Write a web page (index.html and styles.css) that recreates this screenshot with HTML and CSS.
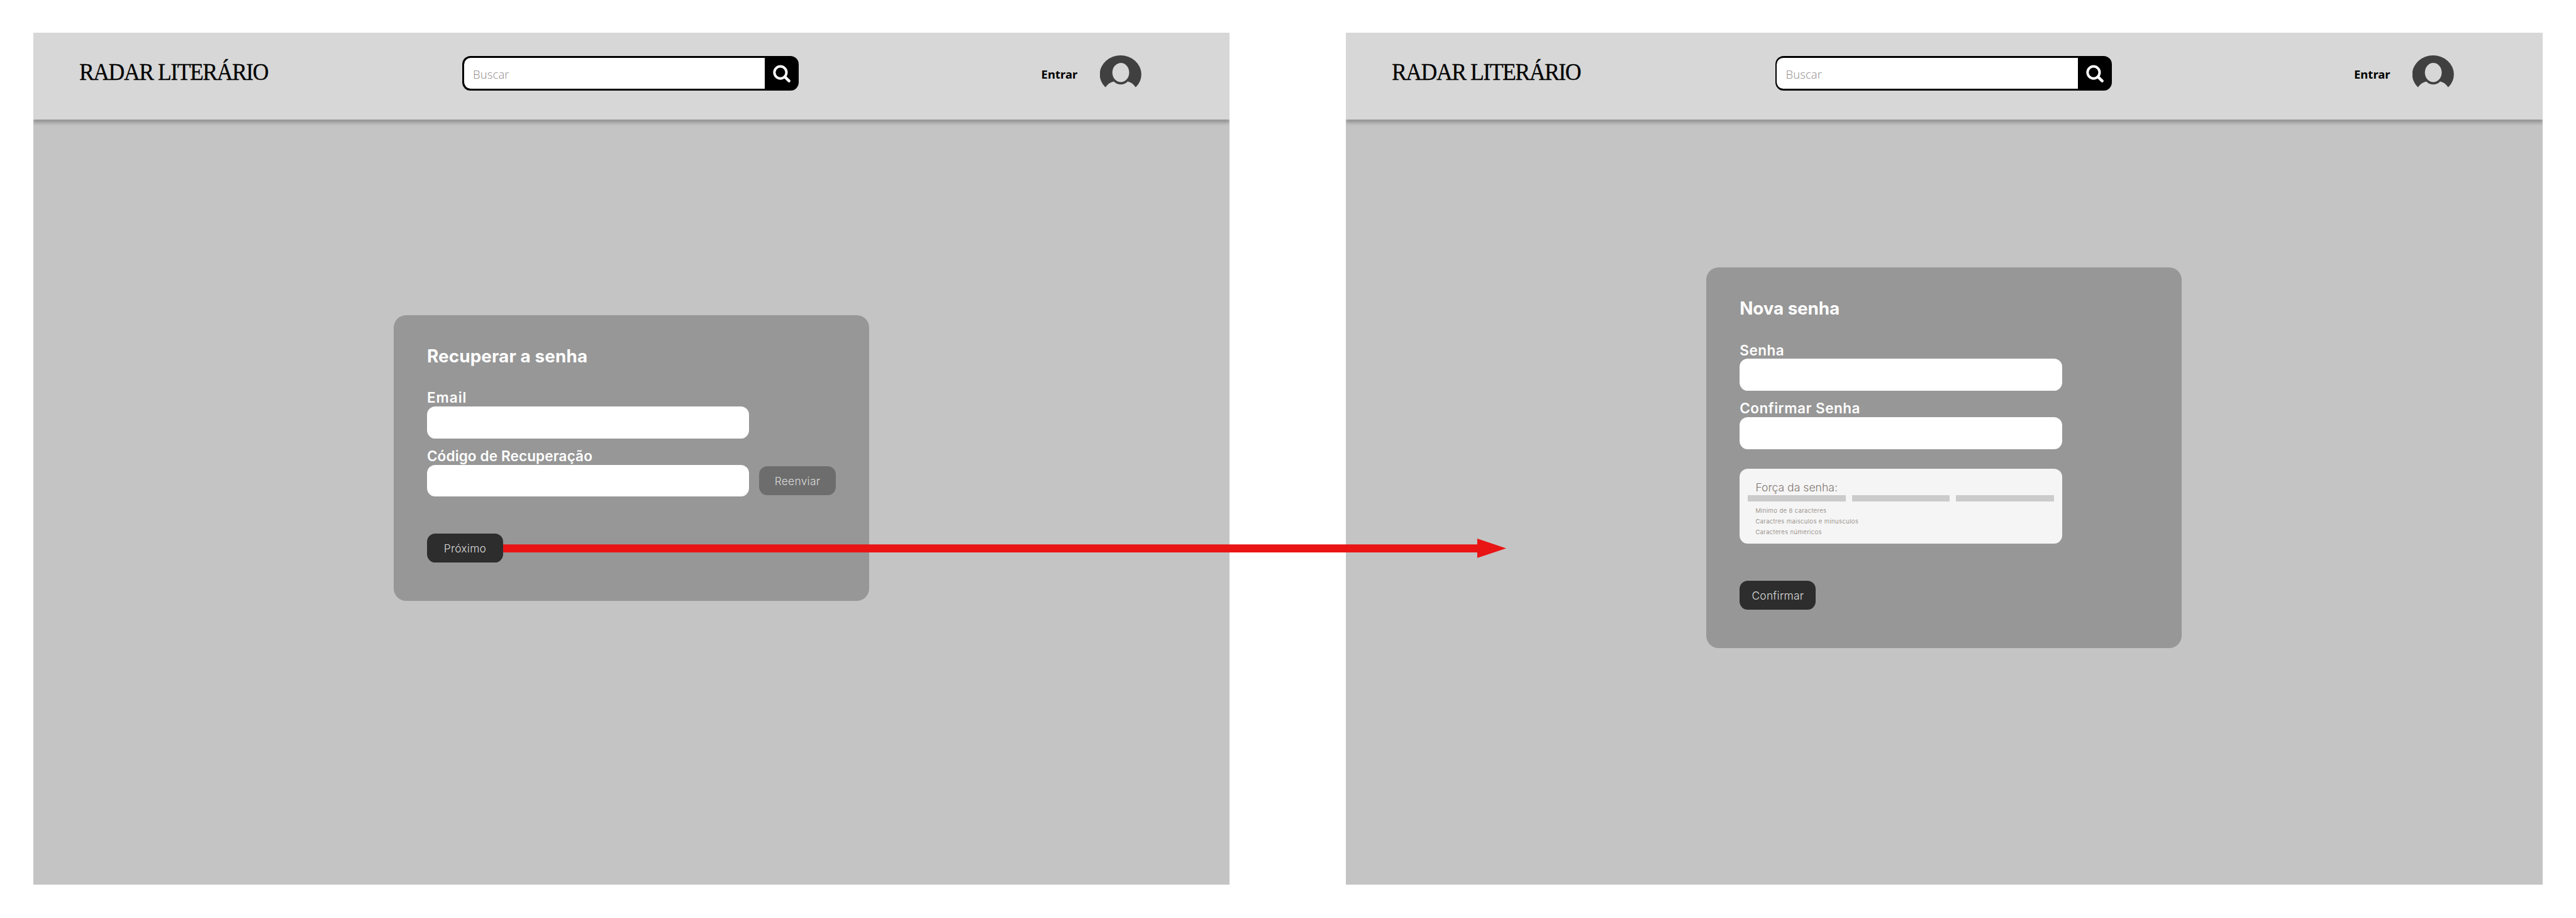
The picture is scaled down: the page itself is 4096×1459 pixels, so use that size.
FILE: index.html
```html
<!DOCTYPE html>
<html lang="pt-BR">
<head>
<meta charset="utf-8">
<title>Radar Literário</title>
<link rel="stylesheet" href="styles.css">
</head>
<body>
<svg class="defs" width="0" height="0">
  <symbol id="search" viewBox="0 0 54.2 55.4">
    <g fill="none" stroke="#fff" stroke-linecap="round">
      <circle cx="24.9" cy="26.1" r="9.6" stroke-width="4"/>
      <path d="M32 33.2L38.6 39.6" stroke-width="4.6"/>
    </g>
  </symbol>
  <symbol id="user" viewBox="0 0 282 216">
    <path fill="#404040" fill-rule="evenodd" d="M37 216A141 128 0 1 1 242 216Q220 184 188 177Q168 197 141 197Q112 197 94 177Q60 184 37 216ZM141 51A57 65 0 1 0 141 181A57 65 0 1 0 141 51Z"/>
  </symbol>
</svg>
<main class="board">
  <section class="screen">
    <header class="header">
      <h1 class="logo">RADAR LITERÁRIO</h1>
      <div class="search"><span class="search-text">Buscar</span><svg class="search-button"><use href="#search"/></svg></div>
      <a class="login">Entrar</a>
      <svg class="avatar"><use href="#user"/></svg>
    </header>
    <form class="card card-recover">
      <h2 class="title">Recuperar a senha</h2>
      <label class="label label-email">Email</label>
      <div class="input"></div>
      <label class="label label-next label-code">Código de Recuperação</label>
      <div class="row"><div class="input"></div><div class="button button-muted">Reenviar</div></div>
      <div class="button button-submit">Próximo</div>
    </form>
  </section>
  <section class="screen">
    <header class="header">
      <h1 class="logo">RADAR LITERÁRIO</h1>
      <div class="search"><span class="search-text">Buscar</span><svg class="search-button"><use href="#search"/></svg></div>
      <a class="login">Entrar</a>
      <svg class="avatar"><use href="#user"/></svg>
    </header>
    <form class="card card-new">
      <h2 class="title title-new">Nova senha</h2>
      <label class="label">Senha</label>
      <div class="input"></div>
      <label class="label label-next">Confirmar Senha</label>
      <div class="input"></div>
      <div class="strength">
        <p class="strength-title">Força da senha:</p>
        <div class="bars"><i></i><i></i><i></i></div>
        <ul class="rules">
          <li>Minimo de 8 caracteres</li>
          <li>Caractres maisculos e minusculos</li>
          <li>Caracteres númericos</li>
        </ul>
      </div>
      <div class="button button-submit">Confirmar</div>
    </form>
  </section>
  <svg class="arrow" viewBox="0 0 1595 30.8">
    <path fill="#e91414" d="M0 9.2H1549V0L1595 15.4L1549 30.8V21.9H0Z"/>
  </svg>
</main>
</body>
</html>
```
FILE: styles.css
```css
* { box-sizing: border-box; margin: 0; padding: 0; }
body { background: #fff; overflow: hidden; font-family: Inter, sans-serif; }
.defs { position: absolute; }

.board {
  position: relative;
  display: flex;
  gap: 184.8px;
  width: 4096px;
  height: 1459px;
  padding: 52px 0 0 52.6px;
}
.screen { flex: none; width: 1902.6px; height: 1353.6px; background: #c4c4c4; overflow: hidden; }

.header {
  display: grid;
  grid-template-columns: 609.7px 920.3px 93.3px 66.2px;
  align-items: center;
  height: 138.2px;
  padding: 0 0 9.3px 73px;
  background: #d7d7d7;
  box-shadow: 0 5.3px 5.3px rgba(0, 0, 0, .25);
}
.logo {
  justify-self: start;
  padding-bottom: 4.8px;
  font: 400 38.4px/1.2 "Liberation Serif", serif;
  letter-spacing: -1.6px;
  white-space: nowrap;
  transform: scaleX(.93);
  transform-origin: left;
  -webkit-text-stroke: .3px #000;
}
.search {
  display: flex;
  justify-content: space-between;
  align-items: center;
  width: 535.1px;
  height: 55.4px;
  border-radius: 13.2px;
  background: #000;
}
.search-text {
  flex: 1;
  height: 49.6px;
  margin-left: 2.8px;
  padding: 1px 0 0 14px;
  border-radius: 10.4px 0 0 10.4px;
  background: #fff;
  color: #8f8989;
  font: 300 18.5px/49.6px "Open Sans", sans-serif;
  letter-spacing: .1px;
}
.search-button { flex: none; width: 54.2px; height: 55.4px; }
.login { padding-top: 1.6px; font: 700 18.5px/25px "Noto Sans", sans-serif; color: #000; }
.avatar { width: 66.2px; height: 50.8px; margin-top: -5.2px; }

.card {
  display: flex;
  flex-direction: column;
  align-items: flex-start;
  width: 755.6px;
  margin-left: auto;
  margin-right: auto;
  padding: 49px 52.8px 0;
  border-radius: 19.8px;
  background: #979797;
  color: #fff;
}
.card-recover { height: 454.5px; margin-top: 310.7px; }
.card-new { height: 604.3px; margin-top: 235.1px; }
.title { margin-bottom: 37.4px; font-size: 27.8px; line-height: 32px; font-weight: 700; letter-spacing: .15px; }
.title-new { letter-spacing: -.1px; }
.label { height: 26.8px; font-size: 22.5px; line-height: 26.5px; font-weight: 600; letter-spacing: .5px; white-space: nowrap; }
.label-email { letter-spacing: 1px; }
.label-code { letter-spacing: .14px; }
.label-next { margin-top: 15.5px; }
.input { flex: none; width: 512.4px; height: 50.5px; border-radius: 13.2px; background: #fff; }
.row { display: flex; align-items: center; gap: 16.1px; }

.button {
  display: flex;
  justify-content: center;
  align-items: center;
  flex: none;
  width: 121.2px;
  height: 46.5px;
  border-radius: 13.2px;
  color: #dcdcdc;
  font-size: 17.4px;
  font-weight: 300;
  letter-spacing: .25px;
}
.button-muted { background: #6d6d6d; }
.button-submit { margin-top: 58.4px; padding-top: 1px; background: #2d2d2d; }

.strength {
  flex: none;
  width: 512.4px;
  height: 119.1px;
  margin-top: 31.6px;
  padding: 18.2px 13.1px 0;
  border-radius: 13.2px;
  background: #f5f5f5;
  color: #80766f;
  font-weight: 300;
}
.strength-title { padding-left: 12px; font-size: 17.6px; line-height: 22px; }
.bars { display: flex; gap: 9.7px; margin-top: 1.7px; }
.bars i { flex: 1; height: 9.4px; background: #cbcbcb; }
.rules { padding: 6px 0 0 12px; list-style: none; font-size: 9.5px; line-height: 17.3px; letter-spacing: .41px; }

.arrow { position: absolute; left: 799.8px; top: 856.1px; width: 1595px; height: 30.8px; }
```
